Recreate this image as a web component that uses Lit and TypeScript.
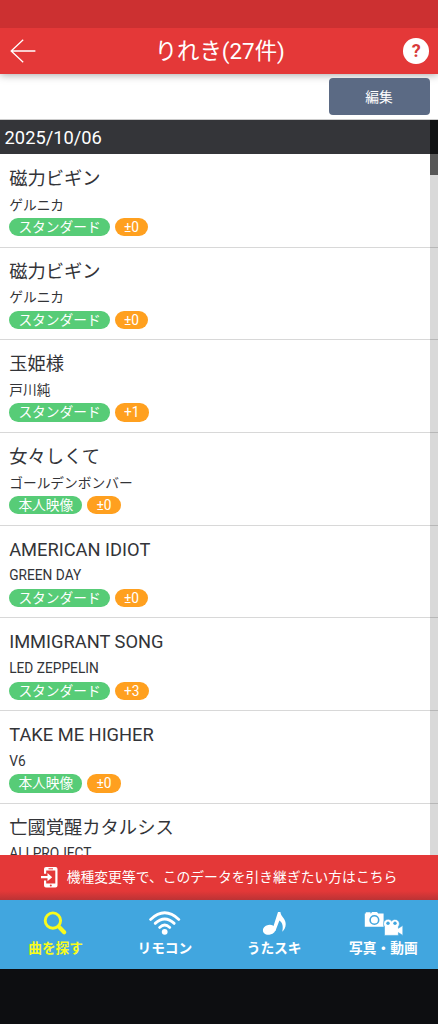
import { css, html, LitElement, svg } from "lit";
import { customElement, property } from "lit/decorators.js";
import { classMap } from "lit/directives/class-map.js";

interface Song {
  title: string;
  artist: string;
  kind: string;
  songKey: string;
}

const SONGS: Song[] = [
  { title: "磁力ビギン", artist: "ゲルニカ", kind: "スタンダード", songKey: "±0" },
  { title: "磁力ビギン", artist: "ゲルニカ", kind: "スタンダード", songKey: "±0" },
  { title: "玉姫様", artist: "戸川純", kind: "スタンダード", songKey: "+1" },
  { title: "女々しくて", artist: "ゴールデンボンバー", kind: "本人映像", songKey: "±0" },
  { title: "AMERICAN IDIOT", artist: "GREEN DAY", kind: "スタンダード", songKey: "±0" },
  { title: "IMMIGRANT SONG", artist: "LED ZEPPELIN", kind: "スタンダード", songKey: "+3" },
  { title: "TAKE ME HIGHER", artist: "V6", kind: "本人映像", songKey: "±0" },
  { title: "亡國覚醒カタルシス", artist: "ALI PROJECT", kind: "", songKey: "" },
];

const searchIcon = svg`
  <circle cx="16.9" cy="10.6" r="7.7" fill="none" stroke="currentColor" stroke-width="2.9"/>
  <path d="M22.8 16.6 L28.2 22.2" stroke="currentColor" stroke-width="4.2" stroke-linecap="round"/>`;

const wifiIcon = svg`
  <g fill="none" stroke="currentColor" stroke-width="2.8" stroke-linecap="round">
    <path d="M5.6 9.4 Q19.7 -3.8 33.8 9.4"/>
    <path d="M10.2 13.4 Q19.7 4.6 29.2 13.4"/>
    <path d="M14.6 17.4 Q19.7 12.6 24.8 17.4"/>
  </g>
  <circle cx="19.7" cy="21.8" r="2.9" fill="currentColor"/>`;

const noteIcon = svg`
  <ellipse cx="15.2" cy="19.8" rx="6.4" ry="4.9" transform="rotate(-12 15.2 19.8)" fill="currentColor"/>
  <path fill="currentColor" d="M18.4 19.5 L24 2 H26.4 C27 7 31.6 8.4 31.7 14 C31.7 17.4 30.2 20 28.2 21.8 C29.4 17 28.8 13 25.4 10.6 L21.4 21 Z"/>`;

const cameraIcon = svg`
  <g transform="translate(1 0)">
    <path fill="currentColor" d="M.8 3.6 H1.8 V2.2 H6.5 V3.6 H7 L8 2 H13 L14.2 3.6 H19.6 V16.8 H.8 Z"/>
    <circle cx="10.4" cy="10" r="4.3" fill="none" stroke="#41a6df" stroke-width="1.6"/>
    <path fill="currentColor" stroke="#41a6df" stroke-width=".6"
      d="M20.5 16.6 A4 4 0 1 1 27.6 11 A4 4 0 1 1 34.4 16.6 V18.3 L38.8 15.4 V25.4 L34.4 22.6 V25.4 H20.5 Z"/>
    <circle cx="24" cy="13.2" r="1.7" fill="#41a6df"/>
    <circle cx="31" cy="13.2" r="1.7" fill="#41a6df"/>
  </g>`;

const NAV = [
  { label: "曲を探す", icon: searchIcon, active: true },
  { label: "リモコン", icon: wifiIcon, active: false },
  { label: "うたスキ", icon: noteIcon, active: false },
  { label: "写真・動画", icon: cameraIcon, active: false },
];

@customElement("song-row")
export class SongRowElement extends LitElement {
  @property({ attribute: false })
  song!: Song;

  render() {
    const { title, artist, kind, songKey } = this.song;

    return html`
      <h2>${title}</h2>
      <p>${artist}</p>
      ${kind
        ? html`
            <div class="tags">
              <span class="tag kind">${kind}</span>
              <span class="tag key">${songKey}</span>
            </div>`
        : null}`;
  }

  static styles = css`
    :host {
      display: block;
      box-sizing: border-box;
      flex: none;
      height: 92.7px;
      padding: 10px 9.2px 0;
      border-bottom: 1px solid #d8d8d8;
      color: #333438;
    }

    h2,
    p {
      margin: 0;
      font-weight: 400;
      white-space: nowrap;
    }

    h2 {
      font-size: 18.3px;
      line-height: 27px;
    }

    p {
      padding-top: 0.5px;
      font-size: 13.73px;
      line-height: 24px;
    }

    .tags {
      display: flex;
      gap: 4.8px;
      margin-top: 1.6px;
    }

    .tag {
      height: 18.3px;
      line-height: 18.3px;
      padding: 0 9.2px;
      border-radius: 9.2px;
      color: #fff;
      font-size: 13.73px;
    }

    .kind {
      background: #57cc77;
    }

    .key {
      background: #ffa01f;
    }
  `;
}

@customElement("app-root")
export class AppRootElement extends LitElement {
  render() {
    return html`
      <div class="status"></div>
      <header>
        <svg class="back" width="26" height="24" viewBox="0 0 26 24" fill="none" stroke="#fff" stroke-width="1.3">
          <path d="M13.2 .8 L1.2 12 L13.2 23.2 M1.2 12 H25.4"/>
        </svg>
        <h1>りれき(27件)</h1>
        <span class="help">?</span>
      </header>
      <div class="toolbar"><button>編集</button></div>
      <main>
        <div class="date">2025/10/06</div>
        ${SONGS.map((song) => html`<song-row .song=${song}></song-row>`)}
        <div class="scrollbar"><div class="thumb"></div></div>
      </main>
      <div class="transfer">
        <svg width="17" height="21" viewBox="0 0 17 21">
          <path fill="#fff" fill-rule="evenodd" d="M5 0 H14.5 Q16.5 0 16.5 2 V18.5 Q16.5 20.5 14.5 20.5 H5 Q3 20.5 3 18.5 V13.5 H5.2 V16.4 H14.3 V3.6 H5.2 V6.8 H3 V2 Q3 0 5 0 Z"/>
          <path fill="#fff" d="M0 9 H6.5 V6 L11.2 10.2 L6.5 14.2 V11.3 H0 Z"/>
          <path stroke="#e43838" d="M7.5 1.8 H12"/>
          <circle cx="9.8" cy="18.4" r="1" fill="#e43838"/>
        </svg>
        <span>機種変更等で、このデータを引き継ぎたい方はこちら</span>
      </div>
      <nav>
        ${NAV.map(
          (item) => html`
            <a class=${classMap({ active: item.active })}>
              <svg width="40" height="27" viewBox="0 0 40 27">${item.icon}</svg>
              <span>${item.label}</span>
            </a>`
        )}
      </nav>`;
  }

  static styles = css`
    :host {
      display: flex;
      flex-direction: column;
      box-sizing: border-box;
      height: 1024px;
      padding-bottom: 55px;
      overflow: hidden;
      background: #0d0e11;
      font-family: Roboto, "Noto Sans CJK JP", sans-serif;
    }

    .status {
      flex: none;
      height: 28px;
      background: #cc3031;
      z-index: 2;
    }

    header {
      display: flex;
      flex: none;
      align-items: center;
      justify-content: space-between;
      box-sizing: border-box;
      height: 45.5px;
      padding: 0 9px 0 10px;
      background: #e43838;
      box-shadow: 0 1px 8px rgba(0, 0, 0, 0.35);
      color: #fff;
      z-index: 1;
    }

    h1 {
      margin: 0;
      padding-top: 2px;
      font-size: 22.4px;
      font-weight: 400;
      line-height: 43px;
    }

    .help {
      width: 25.5px;
      height: 25.5px;
      border-radius: 50%;
      background: #fff;
      color: #d83a3a;
      font-size: 18px;
      font-weight: 700;
      line-height: 26px;
      text-align: center;
    }

    .toolbar {
      display: flex;
      flex: none;
      justify-content: flex-end;
      box-sizing: border-box;
      height: 46.5px;
      padding: 4.5px 8.5px 0 0;
      border-bottom: 1px solid #ccc;
      background: #fff;
    }

    button {
      width: 101px;
      height: 36.5px;
      padding: 0;
      border: 0;
      border-radius: 4px;
      background: #5b6a84;
      color: #fff;
      font: 13.73px/38px Roboto, "Noto Sans CJK JP", sans-serif;
      z-index: 2;
    }

    main {
      display: flex;
      flex: 1;
      flex-direction: column;
      min-height: 0;
      overflow: hidden;
      position: relative;
      background: #fff;
    }

    .date {
      flex: none;
      height: 34px;
      margin-bottom: 1px;
      padding-left: 4.6px;
      background: #343539;
      color: #fff;
      font-size: 18.3px;
      line-height: 36px;
    }

    .scrollbar {
      position: absolute;
      top: 0;
      right: 0;
      bottom: 0;
      width: 8.4px;
      background: rgba(0, 0, 0, 0.15);
    }

    .thumb {
      height: 55px;
      background: rgba(0, 0, 0, 0.6);
    }

    .transfer {
      display: flex;
      flex: none;
      align-items: center;
      justify-content: center;
      gap: 9px;
      height: 45.5px;
      background: linear-gradient(#e43838 80%, #bb3335);
      color: #fff;
      font-size: 13.8px;
      line-height: 20px;
    }

    nav {
      display: grid;
      flex: none;
      grid-template-columns: repeat(4, 1fr);
      box-sizing: border-box;
      height: 69px;
      padding-left: 1px;
      background: #41a6df;
    }

    a {
      display: flex;
      flex-direction: column;
      align-items: center;
      padding-top: 10.2px;
      color: #fff;
      font-size: 13.73px;
      font-weight: 700;
      line-height: 22px;
      white-space: nowrap;
    }

    a.active {
      color: #f8fb1d;
    }
  `;
}
